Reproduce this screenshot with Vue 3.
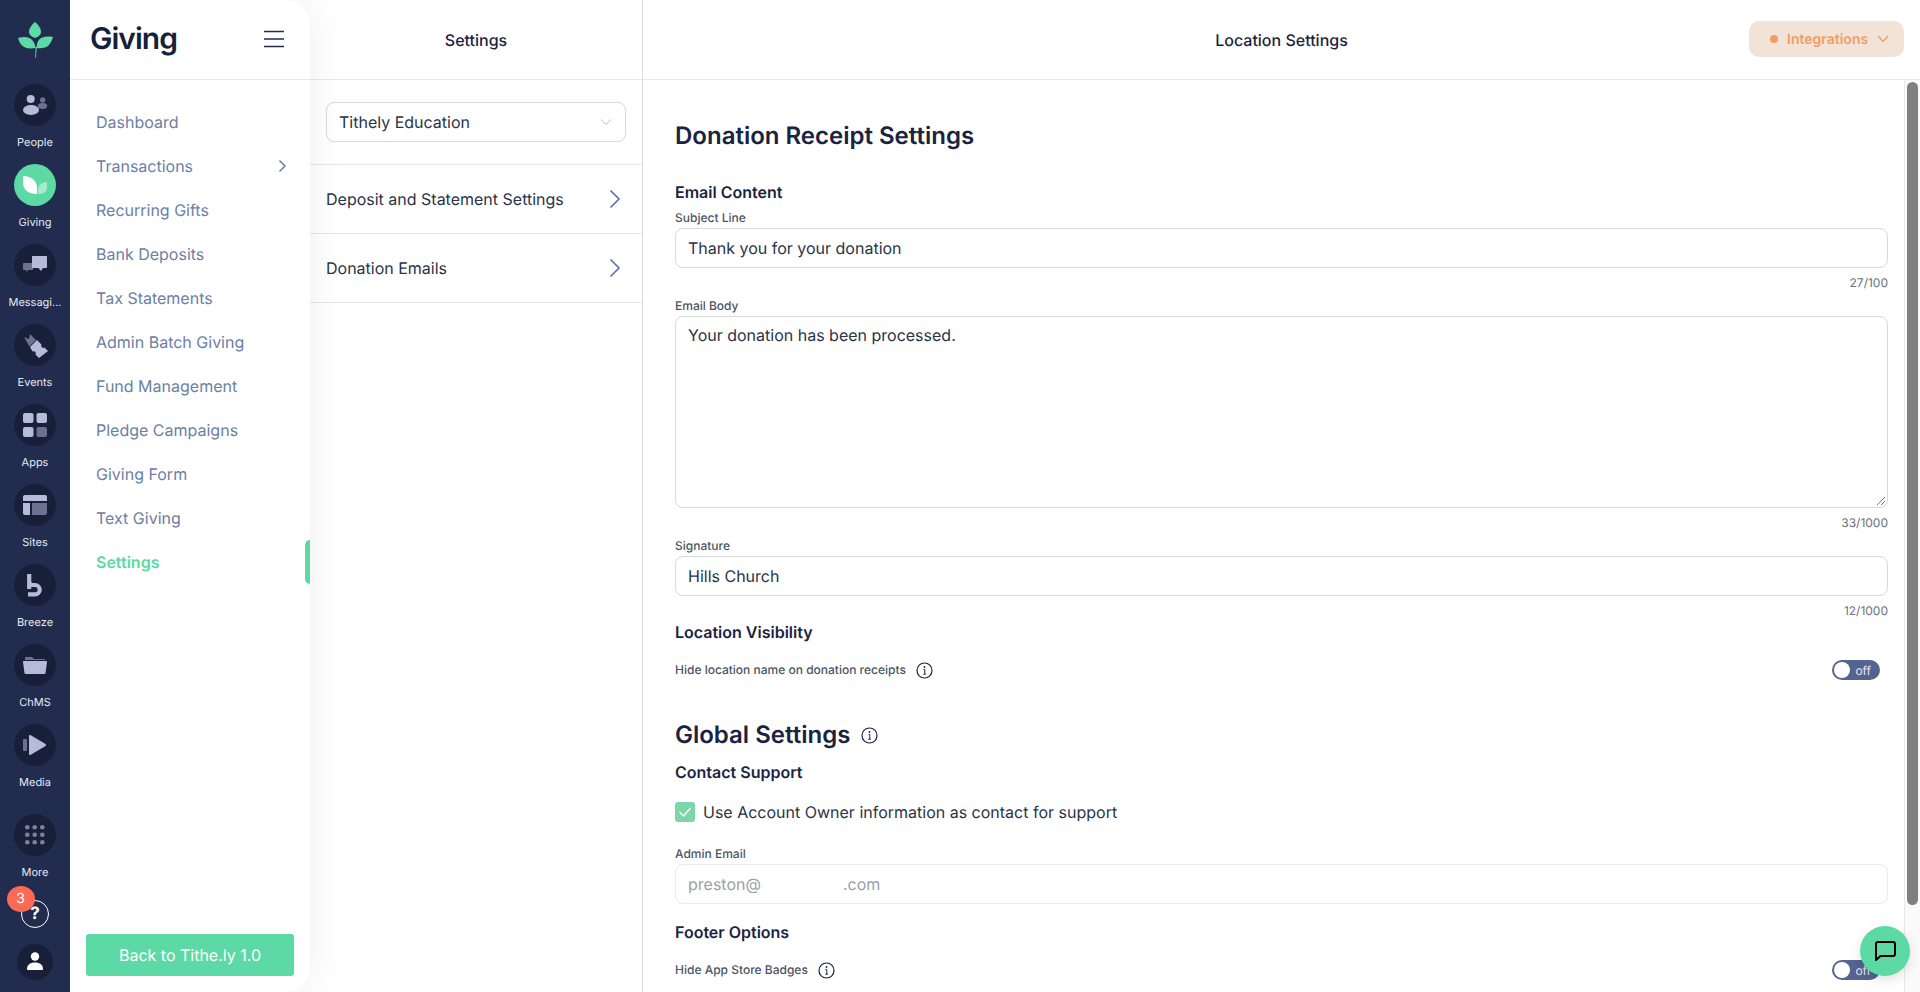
<script setup>
const railItems = [
  { key: 'people', label: 'People' },
  { key: 'giving', label: 'Giving', active: true },
  { key: 'messaging', label: 'Messagi...' },
  { key: 'events', label: 'Events' },
  { key: 'apps', label: 'Apps' },
  { key: 'sites', label: 'Sites' },
  { key: 'breeze', label: 'Breeze' },
  { key: 'chms', label: 'ChMS' },
  { key: 'media', label: 'Media' },
]
const navItems = ['Dashboard', 'Transactions', 'Recurring Gifts', 'Bank Deposits', 'Tax Statements', 'Admin Batch Giving', 'Fund Management', 'Pledge Campaigns', 'Giving Form', 'Text Giving', 'Settings']
const dots = [13.3, 20.7, 28.3]
</script>

<template>
  <div class="app">
    <aside class="rail">
      <div class="logo">
        <svg width="36" height="38" viewBox="0 0 36 38">
          <path d="M18 1 C21 3.500 24 7 24 11 C24 14 21 16 18 17 C15 16 12 14 12 11 C12 7 15 3.500 18 1Z" fill="#5cd9a5" />
          <path d="M1 17 C6 15.500 13 15 16 20 C17.500 22 18.500 25 18.500 27 C13 28 8 27.500 5 24.500 C3 22.500 2 20 1 17Z" fill="#5cd9a5" />
          <path d="M36 16 C30 15 24 15.500 21.500 19.500 C20.500 21 19.500 24 19.500 27 C25 27.500 29 27 31.500 24.500 C33.500 22.500 35 19.500 36 16Z" fill="#5cd9a5" />
          <path d="M18.500 26 H20 L19.500 29 L19 37 H18.300Z" fill="#5cd9a5" />
        </svg>
      </div>
      <div v-for="item in railItems" :key="item.key" class="rail-item">
        <div class="rail-circle" :class="{ active: item.active }">
          <svg width="42" height="42" viewBox="0 0 42 42">
            <g v-if="item.key === 'people'">
              <circle cx="28.7" cy="16" r="2.7" fill="#6a7191" /><ellipse cx="28.5" cy="22" rx="4.7" ry="3" fill="#6a7191" />
              <circle cx="16.7" cy="15" r="4" fill="#b4bcd9" /><ellipse cx="17" cy="26" rx="8" ry="5" fill="#b4bcd9" />
            </g>
            <g v-else-if="item.key === 'giving'">
              <path d="M9 12 C18 12 23 17 23 24 V30 C14 30 9 26 9 18Z" fill="#fff" />
              <path d="M33 18 V24 C33 28 29 30 24 30 V26 C24 21 28 18 33 18Z" fill="#fff" fill-opacity=".45" />
            </g>
            <g v-else-if="item.key === 'messaging'">
              <path d="M10 19 H19 V26 H14 L12 28 V26 H10 C9.400 26 9 25.600 9 25 V20 C9 19.400 9.400 19 10 19Z" fill="#6a7191" />
              <path d="M19 12 H32 C32.600 12 33 12.400 33 13 V23 C33 23.600 32.600 24 32 24 H29 L27 27 L24.500 24 H19 C18.400 24 18 23.600 18 23 V13 C18 12.400 18.400 12 19 12Z" fill="#b4bcd9" />
            </g>
            <g v-else-if="item.key === 'events'">
              <path d="M10 13 L15 15 L16 10 L22 16 L15.500 22.500Z" fill="#6a7191" />
              <path d="M23 16 L27.500 20.500 A2.200 2.200 0 0 0 30.500 23.500 L34 27 L25 34 L21.500 30.500 A2.200 2.200 0 0 0 18.500 27.500 L16 23Z" fill="#b4bcd9" />
            </g>
            <g v-else-if="item.key === 'apps'">
              <rect x="9" y="9" width="10.500" height="10" rx="2" fill="#b4bcd9" />
              <rect x="22.500" y="9" width="10.500" height="10" rx="2" fill="#b4bcd9" />
              <rect x="9" y="23" width="10.500" height="10" rx="2" fill="#b4bcd9" />
              <rect x="22.500" y="23" width="10.500" height="10" rx="2" fill="#6a7191" />
            </g>
            <g v-else-if="item.key === 'sites'">
              <path d="M11 11 H31 C32.100 11 33 11.900 33 13 V17 H9 V13 C9 11.900 9.900 11 11 11Z" fill="#b4bcd9" />
              <path d="M9 19 H16 V31 H11 C9.900 31 9 30.100 9 29Z" fill="#b4bcd9" />
              <path d="M18 19 H33 V29 C33 30.100 32.100 31 31 31 H18Z" fill="#6a7191" />
            </g>
            <g v-else-if="item.key === 'breeze'">
              <path d="M15.200 10 V17.500 C15.200 19.800 16.500 21 18.500 21 H21 A4.700 4.700 0 1 1 21 30.400 H14 M15.200 17 V25" fill="none" stroke="#b4bcd9" stroke-width="4.200" />
            </g>
            <g v-else-if="item.key === 'chms'">
              <path d="M11 15 V14 C11 13.400 11.400 13 12 13 H18 L20 15 H31 V16 H11Z" fill="#6a7191" />
              <path d="M10 17 H32 C32.700 17 33 17.500 33 18 L31.500 29 C31.400 29.600 31 30 30.300 30 H11.700 C11 30 10.600 29.600 10.500 29 L9 18 C9 17.500 9.300 17 10 17Z" fill="#b4bcd9" />
            </g>
            <g v-else-if="item.key === 'media'">
              <rect x="9" y="15" width="4" height="12" rx="1" fill="#6a7191" />
              <path d="M15 12 C15 11 16 10.600 16.800 11.200 L31.500 20 C32.200 20.500 32.200 21.500 31.500 22 L16.800 30.800 C16 31.400 15 31 15 30Z" fill="#b4bcd9" />
            </g>
          </svg>
        </div>
        <span class="rail-label">{{ item.label }}</span>
      </div>
      <div class="rail-item more">
        <div class="rail-circle">
          <svg width="42" height="42" viewBox="0 0 42 42">
            <g v-for="y in dots" :key="y">
              <circle v-for="x in dots" :key="x" :cx="x" :cy="y" r="2.300" fill="#7b8199" />
            </g>
          </svg>
        </div>
        <span class="rail-label">More</span>
      </div>
      <div class="help">
        <span class="help-mark">?</span>
        <span class="badge">3</span>
      </div>
      <div class="user">
        <svg width="36" height="36" viewBox="0 0 36 36">
          <circle cx="18" cy="12.500" r="4.200" fill="#fff" />
          <path d="M10 25 C10 21 13 18.500 18 18.500 C23 18.500 26 21 26 25 C26 25.600 25.600 26 25 26 H11 C10.400 26 10 25.600 10 25Z" fill="#fff" />
        </svg>
      </div>
    </aside>

    <nav class="sidebar">
      <header class="side-head">
        <span class="side-title">Giving</span>
        <svg width="20" height="18" viewBox="0 0 20 18" class="burger">
          <path d="M0 1.500 H20 M0 9 H20 M0 16.500 H20" stroke="#222c4d" stroke-width="1.500" />
        </svg>
      </header>
      <ul class="nav">
        <li v-for="n in navItems" :key="n" class="nav-item" :class="{ current: n === 'Settings' }">
          <span>{{ n }}</span>
          <svg v-if="n === 'Transactions'" width="9" height="14" viewBox="0 0 9 14">
            <path d="M1.500 1.500 L7 7 L1.500 12.500" fill="none" stroke="#6c80a4" stroke-width="1.500" />
          </svg>
          <i v-if="n === 'Settings'" class="indicator"></i>
        </li>
      </ul>
      <button class="back">Back to Tithe.ly 1.0</button>
    </nav>

    <section class="col">
      <header class="col-head">Settings</header>
      <div class="select-wrap">
        <div class="select">
          <span>Tithely Education</span>
          <svg width="12" height="8" viewBox="0 0 12 8">
            <path d="M1 1.500 L6 6.500 L11 1.500" fill="none" stroke="#7fdcb5" stroke-width="1" />
          </svg>
        </div>
      </div>
      <div class="col-row">
        <span>Deposit and Statement Settings</span>
        <svg width="12" height="20" viewBox="0 0 12 20"><path d="M1.500 1.500 L10 10 L1.500 18.500" fill="none" stroke="#5f6ea6" stroke-width="1.600" /></svg>
      </div>
      <div class="col-row">
        <span>Donation Emails</span>
        <svg width="12" height="20" viewBox="0 0 12 20"><path d="M1.500 1.500 L10 10 L1.500 18.500" fill="none" stroke="#5f6ea6" stroke-width="1.600" /></svg>
      </div>
    </section>

    <main class="main">
      <header class="main-head">
        <span class="main-title">Location Settings</span>
        <button class="integrations">
          <i class="dot"></i>
          <span>Integrations</span>
          <svg width="12" height="8" viewBox="0 0 12 8"><path d="M1 1 L6 6.500 L11 1" fill="none" stroke="#f39c5f" stroke-width="1.300" /></svg>
        </button>
      </header>
      <div class="main-body">
        <div class="form">
          <h2 class="h-large first">Donation Receipt Settings</h2>
          <h3 class="h-small email">Email Content</h3>
          <label class="lab subject">Subject Line</label>
          <div class="field">Thank you for your donation</div>
          <div class="count">27/100</div>
          <label class="lab">Email Body</label>
          <div class="field area">Your donation has been processed.
            <svg class="grip" width="10" height="10" viewBox="0 0 10 10"><path d="M9 1 L1 9 M9 5 L5 9" stroke="#777" stroke-width="1" /></svg>
          </div>
          <div class="count">33/1000</div>
          <label class="lab">Signature</label>
          <div class="field">Hills Church</div>
          <div class="count">12/1000</div>
          <h3 class="h-small loc">Location Visibility</h3>
          <div class="toggle-row r1">
            <div class="toggle-left">
              <span class="lab flat">Hide location name on donation receipts</span>
              <svg class="info" width="17" height="17" viewBox="0 0 17 17">
                <circle cx="8.500" cy="8.500" r="7.500" fill="none" stroke="#1a2340" stroke-width="1.200" />
                <circle cx="8.500" cy="5" r="0.900" fill="#1a2340" />
                <path d="M7.500 7.500 H8.800 V12 M7.300 12.200 H9.900" fill="none" stroke="#1a2340" stroke-width="1" />
              </svg>
            </div>
            <div class="toggle"><i class="knob"></i><span>off</span></div>
          </div>
          <div class="global">
            <h2 class="h-large">Global Settings</h2>
            <svg class="info" width="17" height="17" viewBox="0 0 17 17">
              <circle cx="8.500" cy="8.500" r="7.500" fill="none" stroke="#1a2340" stroke-width="1.200" />
              <circle cx="8.500" cy="5" r="0.900" fill="#1a2340" />
              <path d="M7.500 7.500 H8.800 V12 M7.300 12.200 H9.900" fill="none" stroke="#1a2340" stroke-width="1" />
            </svg>
          </div>
          <h3 class="h-small contact">Contact Support</h3>
          <div class="check-row">
            <span class="check">
              <svg width="14" height="12" viewBox="0 0 14 12"><path d="M1.500 6 L5.500 10 L12.500 2" fill="none" stroke="#fff" stroke-width="1.300" /></svg>
            </span>
            <span>Use Account Owner information as contact for support</span>
          </div>
          <label class="lab admin">Admin Email</label>
          <div class="field disabled"><span>preston@</span><span class="domain">.com</span></div>
          <h3 class="h-small foot">Footer Options</h3>
          <div class="toggle-row r2">
            <div class="toggle-left">
              <span class="lab flat">Hide App Store Badges</span>
              <svg class="info" width="17" height="17" viewBox="0 0 17 17">
                <circle cx="8.500" cy="8.500" r="7.500" fill="none" stroke="#1a2340" stroke-width="1.200" />
                <circle cx="8.500" cy="5" r="0.900" fill="#1a2340" />
                <path d="M7.500 7.500 H8.800 V12 M7.300 12.200 H9.900" fill="none" stroke="#1a2340" stroke-width="1" />
              </svg>
            </div>
            <div class="toggle"><i class="knob"></i><span>off</span></div>
          </div>
        </div>
        <div class="track"><div class="thumb"></div></div>
      </div>
    </main>

    <button class="chat" aria-label="Chat">
      <svg width="24" height="24" viewBox="0 0 24 24">
        <path d="M3 21 V5 C3 3.900 3.900 3 5 3 H20 C21.100 3 22 3.900 22 5 V15 C22 16.100 21.100 17 20 17 H7.500 L3 21Z" fill="none" stroke="#000" stroke-width="2" stroke-linejoin="round" />
      </svg>
    </button>
  </div>
</template>

<style>
html, body { margin: 0; height: 100%; overflow: hidden; background: #fff; }
</style>

<style scoped>
.app {
  display: flex;
  height: 992px;
  width: 1920px;
  overflow: hidden;
  position: relative;
  font-family: Inter, "Liberation Sans", sans-serif;
  text-rendering: geometricPrecision;
  color: #1a2340;
  background: #fff;
}
.rail {
  width: 70px;
  flex: none;
  background: #222c4e;
  display: flex;
  flex-direction: column;
  align-items: center;
  position: relative;
  z-index: 3;
}
.logo { height: 84px; display: flex; justify-content: center; padding-top: 21px; box-sizing: border-box; }
.logo svg { display: block; }
.rail-item { height: 80px; display: flex; flex-direction: column; align-items: center; width: 100%; }
.rail-item.more { margin-top: 10px; height: 66px; }
.rail-circle { width: 42px; height: 42px; border-radius: 50%; background: #182039; display: block; }
.rail-circle svg { display: block; }
.rail-circle.active { background: #5cd9a5; }
.rail-label {
  margin-top: 8px;
  font-size: 11px;
  line-height: 16px;
  color: #e6e9f2;
  white-space: nowrap;
}
.help {
  position: relative;
  width: 28px;
  height: 28px;
  box-sizing: border-box;
  border: 1.500px solid #fff;
  border-radius: 50%;
  margin-top: 20px;
  display: flex;
  align-items: center;
  justify-content: center;
  color: #fff;
}
.help-mark { font-size: 17px; font-weight: 700; line-height: 1; }
.badge {
  position: absolute;
  left: -15.500px;
  top: -15.500px;
  width: 28px;
  height: 26px;
  border-radius: 50%;
  background: #fa6a55;
  color: #fff;
  font-size: 14px;
  line-height: 25px;
  text-align: center;
}
.user { width: 36px; height: 36px; border-radius: 50%; background: #182039; margin-top: 16px; }
.user svg { display: block; }

.sidebar {
  width: 240px;
  flex: none;
  background: #fff;
  border-radius: 0 24px 24px 0;
  box-shadow: 0 0 40px rgba(0, 0, 0, 0.07);
  display: flex;
  flex-direction: column;
  position: relative;
  z-index: 2;
}
.side-head {
  height: 80px;
  box-sizing: border-box;
  border-bottom: 1px solid #e8e8e8;
  display: flex;
  align-items: center;
  justify-content: space-between;
  padding: 0 26px 2px 20px;
}
.side-title { font-size: 30px; font-weight: 600; color: #161f3c; letter-spacing: -1px; }
.burger { display: block; }
.nav { list-style: none; margin: 20px 0 0; padding: 0; flex: 1; }
.nav-item {
  height: 44px;
  display: flex;
  align-items: center;
  justify-content: space-between;
  padding: 0 23px 0 26px;
  font-size: 16px;
  color: #6c80a4;
  position: relative;
}
.nav-item.current { color: #5cd9a5; font-weight: 600; }
.indicator {
  position: absolute;
  right: 0;
  top: 0;
  width: 5px;
  height: 44px;
  background: #5cd9a5;
  border-radius: 5px 0 0 5px;
}
.back {
  margin: 0 16px 16px;
  height: 42px;
  border: 0;
  border-radius: 3px;
  background: #5cd9a5;
  color: #fff;
  font: 400 16px Inter, "Liberation Sans", sans-serif;
  text-rendering: geometricPrecision;
}

.col {
  width: 333px;
  flex: none;
  box-sizing: border-box;
  border-right: 1px solid #dcdcdc;
  background: #fff;
}
.col-head {
  height: 80px;
  box-sizing: border-box;
  border-bottom: 1px solid #e8e8e8;
  display: flex;
  align-items: center;
  justify-content: center;
  font-size: 16px;
  font-weight: 500;
}
.select-wrap { height: 85px; box-sizing: border-box; padding: 22px 16px 0; border-bottom: 1px solid #e8e8e8; }
.select {
  height: 40px;
  box-sizing: border-box;
  border: 1px solid #d9d9d9;
  border-radius: 8px;
  display: flex;
  align-items: center;
  justify-content: space-between;
  padding: 0 13px 0 12px;
  font-size: 16px;
  color: #2a3446;
  background: #fff;
}
.col-row {
  height: 69px;
  box-sizing: border-box;
  border-bottom: 1px solid #e8e8e8;
  display: flex;
  align-items: center;
  justify-content: space-between;
  padding: 0 21px 0 16px;
  font-size: 16px;
  color: #2a3446;
}

.main { flex: 1; display: flex; flex-direction: column; min-width: 0; }
.main-head {
  height: 80px;
  flex: none;
  box-sizing: border-box;
  border-bottom: 1px solid #e8e8e8;
  display: flex;
  align-items: center;
  justify-content: flex-end;
  padding: 0 16px 1px;
  position: relative;
}
.main-title { position: absolute; left: 0; right: 0; text-align: center; font-size: 16px; font-weight: 500; padding-top: 1px; }
.integrations {
  position: relative;
  width: 155px;
  height: 36px;
  border: 0;
  border-radius: 10px;
  background: #f2e3d9;
  color: #f39c5f;
  display: flex;
  align-items: center;
  gap: 9px;
  padding: 0 0 0 21px;
  font: 600 14px Inter, "Liberation Sans", sans-serif;
  text-rendering: geometricPrecision;
}
.dot { width: 8px; height: 8px; border-radius: 50%; background: #f39c5f; flex: none; }
.main-body { flex: 1; display: flex; min-height: 0; }
.form { flex: 1; min-width: 0; padding: 0 16px 0 32px; overflow: hidden; }
.h-large { margin: 0; font-size: 24px; line-height: 32px; font-weight: 600; color: #1a2340; }
.h-large.first { margin-top: 40px; }
.h-small { margin: 0; font-size: 16px; line-height: 22px; font-weight: 600; color: #1a2340; }
.email { margin-top: 29px; }
.lab { display: block; font-size: 12px; line-height: 16px; font-weight: 500; color: #4b5563; }
.lab.subject { margin-top: 7px; }
.lab.flat { display: inline; }
.field {
  position: relative;
  box-sizing: border-box;
  height: 40px;
  margin-top: 2px;
  border: 1px solid #d9d9d9;
  border-radius: 8px;
  padding: 0 12px;
  display: flex;
  align-items: center;
  font-size: 16px;
  color: #2a3446;
  background: #fff;
}
.field.area { height: 192px; align-items: flex-start; padding-top: 8px; line-height: 20px; }
.grip { position: absolute; right: 1px; bottom: 1px; }
.count { font-size: 12px; line-height: 16px; color: #6b7280; text-align: right; margin: 7px 0; }
.loc { margin-top: -5px; }
.toggle-row { display: flex; align-items: center; justify-content: space-between; padding-right: 8px; }
.r1 { margin-top: 16px; height: 22px; }
.r2 { margin-top: 16px; height: 22px; }
.toggle-left { display: flex; align-items: center; gap: 10px; }
.info { display: block; flex: none; }
.toggle {
  width: 48px;
  height: 20px;
  box-sizing: border-box;
  border-radius: 10px;
  background: #55638f;
  display: flex;
  align-items: center;
  justify-content: space-between;
  padding: 0 9px 0 2px;
  color: #e6e9f2;
  font-size: 12px;
}
.knob { width: 16px; height: 16px; border-radius: 50%; background: #fff; display: block; }
.global { display: flex; align-items: center; gap: 11px; margin-top: 38px; }
.contact { margin-top: 10px; }
.check-row { display: flex; align-items: center; gap: 8px; margin-top: 18px; font-size: 16px; line-height: 22px; color: #2a3446; }
.check { width: 20px; height: 20px; border-radius: 3px; background: #7dd6a8; display: flex; align-items: center; justify-content: center; }
.admin { margin-top: 23px; }
.field.disabled { border-color: #eaeaea; color: #9a9fa8; }
.domain { margin-left: 82px; }
.foot { margin-top: 17px; }
.track { width: 16px; flex: none; box-sizing: border-box; border-left: 1px solid #e8e8e8; background: #fafafa; padding: 2px 2px 0 2px; }
.thumb { height: 823px; border-radius: 6px; background: #7f7f7f; }
.chat {
  position: absolute;
  left: 1860px;
  top: 926px;
  width: 50px;
  height: 50px;
  border: 0;
  border-radius: 50%;
  background: #5cd9a5;
  padding: 0;
  display: flex;
  align-items: center;
  justify-content: center;
  box-shadow: 0 4px 12px rgba(0, 0, 0, 0.12);
  z-index: 5;
}
</style>
